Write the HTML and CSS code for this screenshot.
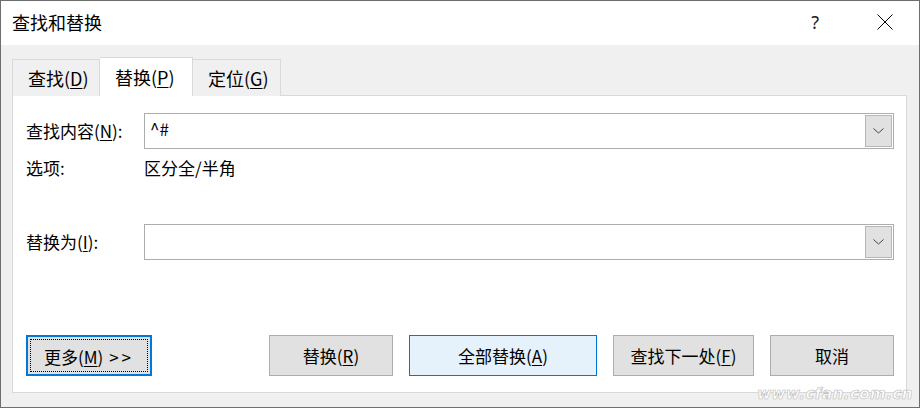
FILE: index.html
```html
<!DOCTYPE html>
<html lang="zh-CN">
<head>
    <meta charset="UTF-8">
    <title>查找和替换</title>
    <link rel="stylesheet" href="styles.css">
</head>
<body>
    <div class="window">
        <div class="titlebar">
            <span class="title">查找和替换</span>
            <span class="help">?</span>
            <span class="close">
                <svg width="16" height="16" viewBox="0 0 16 16"><path d="M0.5 0.5 L15.5 15.5 M15.5 0.5 L0.5 15.5" stroke="#000" stroke-width="1" fill="none"/></svg>
            </span>
        </div>

        <div class="content">
            <div class="tabs">
                <div class="tab">查找(<u>D</u>)</div>
                <div class="tab active">替换(<u>P</u>)</div>
                <div class="tab">定位(<u>G</u>)</div>
            </div>

            <div class="panel">
                <div class="row">
                    <label class="label">查找内容(<u>N</u>):</label>
                    <div class="combo">
                        <span class="combo-text">^#</span>
                        <span class="drop">
                            <svg width="11" height="6" viewBox="0 0 11 6"><path d="M0.5 0.5 L5.5 5 L10.5 0.5" stroke="#444" stroke-width="1" fill="none"/></svg>
                        </span>
                    </div>
                </div>
                <div class="row options">
                    <span class="label">选项:</span>
                    <span class="opt-value">区分全/半角</span>
                </div>
                <div class="row replace-row">
                    <label class="label">替换为(<u>I</u>):</label>
                    <div class="combo">
                        <span class="combo-text"></span>
                        <span class="drop">
                            <svg width="11" height="6" viewBox="0 0 11 6"><path d="M0.5 0.5 L5.5 5 L10.5 0.5" stroke="#444" stroke-width="1" fill="none"/></svg>
                        </span>
                    </div>
                </div>

                <div class="buttons">
                    <button class="btn more"><span class="focus">更多(<u>M</u>) <span class="arrows">&gt;&gt;</span></span></button>
                    <div class="btn-group">
                        <button class="btn w124">替换(<u>R</u>)</button>
                        <button class="btn default w188">全部替换(<u>A</u>)</button>
                        <button class="btn w141">查找下一处(<u>F</u>)</button>
                        <button class="btn w124">取消</button>
                    </div>
                </div>
            </div>
        </div>

        <div class="watermark">www.cfan.com.cn</div>
    </div>
</body>
</html>
```

FILE: styles.css
```css
* {
    box-sizing: border-box;
}
body {
    margin: 0;
    font-family: "Noto Sans CJK SC", "Noto Sans", sans-serif;
    font-size: 17px;
    color: #000;
    background: #fff;
}
u {
    text-decoration: underline;
    text-underline-offset: 2px;
}
.window {
    position: relative;
    width: 920px;
    height: 408px;
    border: 1px solid #6e6e6e;
    background: #f0f0f0;
    display: flex;
    flex-direction: column;
}
.titlebar {
    height: 44px;
    background: #fff;
    display: flex;
    align-items: center;
    padding-left: 11px;
}
.title {
    font-size: 18px;
    line-height: 24px;
    margin-top: -2px;
}
.help {
    margin-left: auto;
    font-family: "Noto Sans", sans-serif;
    font-size: 18px;
    color: #222;
    margin-right: 58px;
    margin-top: -2px;
}
.close {
    width: 16px;
    height: 16px;
    margin-right: 26px;
    margin-top: -2px;
    display: flex;
}
.content {
    flex: 1;
    padding: 12px 12px 14px 11px;
    display: flex;
    flex-direction: column;
}
.tabs {
    display: flex;
    align-items: flex-end;
    height: 39px;
    margin-bottom: -1px;
    position: relative;
    z-index: 1;
}
.tab {
    height: 37px;
    border: 1px solid #d9d9d9;
    border-bottom: none;
    background: #f0f0f0;
    font-size: 18px;
    line-height: 36px;
    padding: 0 0 0 15px;
    width: 88px;
    white-space: nowrap;
}
.tab + .tab {
    border-left: none;
}
.tab.active {
    height: 39px;
    background: #fff;
    width: 93px;
    line-height: 39px;
}
.panel {
    flex: 1;
    background: #fff;
    border: 1px solid #d9d9d9;
    padding: 17px 12px 16px 13px;
    display: flex;
    flex-direction: column;
}
.row {
    display: flex;
    align-items: center;
}
.label {
    width: 118px;
    flex-shrink: 0;
    font-size: 17px;
    line-height: 24px;
    white-space: nowrap;
}
.combo {
    flex: 1;
    height: 36px;
    border: 1px solid #adadad;
    background: #fff;
    display: flex;
    align-items: center;
    padding: 1px;
}
.combo-text {
    flex: 1;
    padding-left: 4px;
    font-size: 17px;
    line-height: 24px;
    margin-top: -5px;
}
.drop {
    width: 27px;
    height: 32px;
    border: 1px solid #b7b7b7;
    background: #e1e1e1;
    display: flex;
    align-items: center;
    justify-content: center;
}
.options {
    margin-top: 7px;
    height: 24px;
}
.opt-value {
    line-height: 24px;
}
.replace-row {
    margin-top: 44px;
}
.buttons {
    margin-top: auto;
    display: flex;
    align-items: center;
}
.btn-group {
    margin-left: auto;
    display: flex;
    gap: 16px;
}
.btn {
    height: 41px;
    border: 1px solid #adadad;
    background: #e1e1e1;
    font-family: inherit;
    font-size: 17px;
    color: #000;
    padding: 0;
    line-height: 24px;
    white-space: nowrap;
}
.w124 {
    width: 124px;
}
.w141 {
    width: 141px;
}
.w188 {
    width: 188px;
}
.btn.default {
    background: #e5f1fb;
    border-color: #0078d7;
}
.btn.more {
    width: 126px;
    border: 2px solid #0078d7;
    padding: 2px;
}
.focus {
    display: block;
    height: 100%;
    border: 1px dotted #000;
    line-height: 33px;
}
.arrows {
    letter-spacing: 3px;
    margin-left: 2px;
}
.watermark {
    position: absolute;
    right: 6px;
    bottom: 4px;
    font-family: "DejaVu Sans", sans-serif;
    font-style: italic;
    font-weight: bold;
    font-size: 15px;
    letter-spacing: 0.5px;
    color: #fff;
    -webkit-text-stroke: 0.6px #b8b8b8;
}
```
